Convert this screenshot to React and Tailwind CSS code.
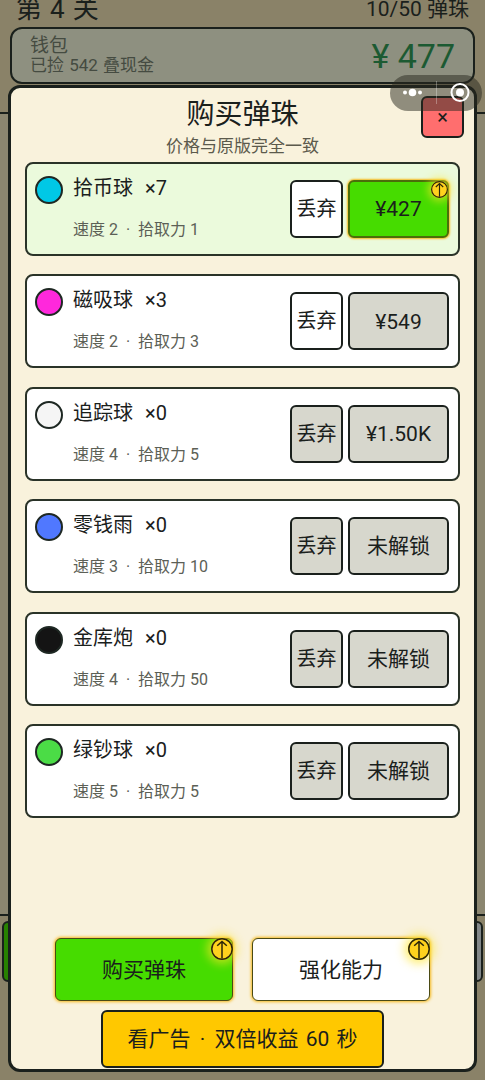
import React, { useState } from 'react';
import clsx from 'clsx';

const marbles = [
  { name: '拾币球', count: 7, speed: 2, power: 1, color: 'bg-[#00c8e6]', price: '¥427', canBuy: true, canDrop: true },
  { name: '磁吸球', count: 3, speed: 2, power: 3, color: 'bg-[#ff28dc]', price: '¥549', canDrop: true },
  { name: '追踪球', count: 0, speed: 4, power: 5, color: 'bg-[#f5f5f5]', price: '¥1.50K' },
  { name: '零钱雨', count: 0, speed: 3, power: 10, color: 'bg-[#5078ff]', price: '未解锁' },
  { name: '金库炮', count: 0, speed: 4, power: 50, color: 'bg-[#141414]', price: '未解锁' },
  { name: '绿钞球', count: 0, speed: 5, power: 5, color: 'bg-[#4bdc46]', price: '未解锁' },
];

const UpBadge = ({ small }) => (
  <span
    className={clsx(
      'absolute -top-px -right-px rounded-full bg-[#ffd21e]',
      small ? 'size-[17px] shadow-[0_0_8px_3px_#ffe628a0]' : 'size-[22px] shadow-[0_0_10px_4px_#ffe628a0]'
    )}
  >
    <svg viewBox="0 0 22 22" className="block size-full" fill="none" stroke="#2b2609" strokeWidth="1.5">
      <circle cx="11" cy="11" r="10.2" />
      <path d="M11 20.5V3.4M6.2 7.8L11 3.4l4.8 4.4" />
    </svg>
  </span>
);

const MarbleCard = ({ marble }) => (
  <li
    className={clsx(
      'flex h-[94px] items-center rounded-lg border-2 border-[#2a3328] pl-2 pr-[9px]',
      marble.canBuy ? 'bg-[#ebfadc]' : 'bg-white'
    )}
  >
    <span className={clsx('mt-3 size-7 shrink-0 self-start rounded-full border-2 border-[#1e2823]', marble.color)}></span>
    <div className="ml-[10px] flex-1">
      <h3 className="flex gap-3 text-[20px] leading-6">
        {marble.name} <span>×{marble.count}</span>
      </h3>
      <p className="mt-[18px] text-[16px] leading-6 text-[#5c6056]">
        速度 {marble.speed} <span className="mx-1">·</span> 拾取力 {marble.power}
      </p>
    </div>
    <button
      disabled={!marble.canDrop}
      className={clsx(
        'h-[58px] w-[53px] shrink-0 rounded-md border-2 border-[#1a201c] text-[20px]',
        marble.canDrop ? 'bg-white' : 'bg-[#d7d7cd]'
      )}
    >
      丢弃
    </button>
    <button
      disabled={!marble.canBuy}
      className={clsx(
        'relative ml-[5px] h-[58px] w-[101px] shrink-0 rounded-md border-2 pt-0.5 text-[21px]',
        marble.canBuy
          ? 'border-[#4b6e0a] bg-[#46dc00] shadow-[0_0_2px_1px_#f5b91e]'
          : 'border-[#1a201c] bg-[#d7d7cd]'
      )}
    >
      {marble.price}
      {marble.canBuy && <UpBadge small />}
    </button>
  </li>
);

const TabButton = ({ label, active, onClick }) => (
  <button
    onClick={onClick}
    className={clsx(
      'relative h-[63px] w-[178px] rounded-md border border-[#4a4a14] pt-0.5 text-[21px] shadow-[0_0_3px_1px_#f5b91e]',
      active ? 'bg-[#46dc00]' : 'bg-white'
    )}
  >
    {label}
    <UpBadge />
  </button>
);

const App = () => {
  const [tab, setTab] = useState('buy');

  return (
    <div className="relative flex h-screen min-h-[1080px] flex-col overflow-hidden bg-[#8a8268] font-[Roboto,'Noto_Sans_CJK_SC',sans-serif] text-[#1a201c]">
      {/* game screen behind the shop */}
      <header className="flex h-[27px] shrink-0 items-end justify-between px-4">
        <h1 className="flex gap-2 text-[26px] leading-9">
          <span>第</span> <span>4</span> <span>关</span>
        </h1>
        <span className="text-[21px] leading-9">10/50 弹珠</span>
      </header>
      <section className="mx-[10px] flex h-[57px] shrink-0 items-center justify-between rounded-xl border-2 border-[#1a201c] bg-[#8e9080] px-[18px]">
        <div className="pb-0.5 text-[#454b41]">
          <p className="text-[19px] leading-5">钱包</p>
          <p className="text-[17px] leading-[18px]">
            已捡 <span className="mx-px">542</span> 叠现金
          </p>
        </div>
        <span className="pt-0.5 text-[34px] text-[#1c5a32]">¥ 477</span>
      </section>
      <div className="mt-7 flex-1 border-y-2 border-[#1a201c] bg-[#8b8670]"></div>
      <footer className="flex h-[164px] shrink-0 justify-between px-0.5 pt-[5px]">
        <span className="h-[61px] w-20 rounded-md border-2 border-[#1a201c] bg-[#288200]"></span>
        <span className="h-[61px] w-20 rounded-md border-2 border-[#1a201c] bg-[#828788]"></span>
      </footer>

      {/* shop dialog */}
      <div
        role="dialog"
        className="absolute inset-x-2 top-[85px] bottom-2 flex flex-col rounded-xl border-3 border-[#1a201c] bg-[#f9f2dc] px-[14px]"
      >
        <div className="text-center">
          <h2 className="mt-1.5 text-[28px] leading-[42px]">购买弹珠</h2>
          <p className="text-[17px] leading-5 text-[#5c5a4c]">价格与原版完全一致</p>
        </div>
        <button
          aria-label="关闭"
          className="absolute top-2 right-[10px] h-[42px] w-[43px] rounded-md border-2 border-[#1a201c] bg-[#ff6e6e] text-[20px]"
        >
          ×
        </button>

        <ul className="mt-1.5 flex min-h-[656px] flex-col justify-between">
          {marbles.map((m) => (
            <MarbleCard key={m.name} marble={m} />
          ))}
        </ul>

        <div className="mt-auto flex justify-center gap-[19px]">
          <TabButton label="购买弹珠" active={tab === 'buy'} onClick={() => setTab('buy')} />
          <TabButton label="强化能力" active={tab === 'power'} onClick={() => setTab('power')} />
        </div>
        <button className="mx-auto mt-[9px] mb-px h-[58px] w-[283px] shrink-0 rounded-md border-2 border-[#1a201c] bg-[#ffc800] pt-0.5 text-[21px]">
          看广告 <span className="mx-1">·</span> 双倍收益 <span className="mx-0.5">60</span> 秒
        </button>
      </div>

      {/* mini program capsule */}
      <div className="absolute top-[75px] right-[3px] h-9 w-[92px] rounded-full bg-[#28281e]/50">
        <svg viewBox="0 0 92 36" className="block size-full" fill="#fff">
          <circle cx="15" cy="17.5" r="2" />
          <circle cx="22.5" cy="17.5" r="3.8" />
          <circle cx="30" cy="17.5" r="2" />
          <path d="M46.5 6v23" stroke="#fff" strokeOpacity="0.3" />
          <circle cx="70" cy="17.5" r="8.5" fill="none" stroke="#fff" strokeWidth="2" />
          <circle cx="70" cy="17.5" r="4" />
        </svg>
      </div>
    </div>
  );
};

export default App;
